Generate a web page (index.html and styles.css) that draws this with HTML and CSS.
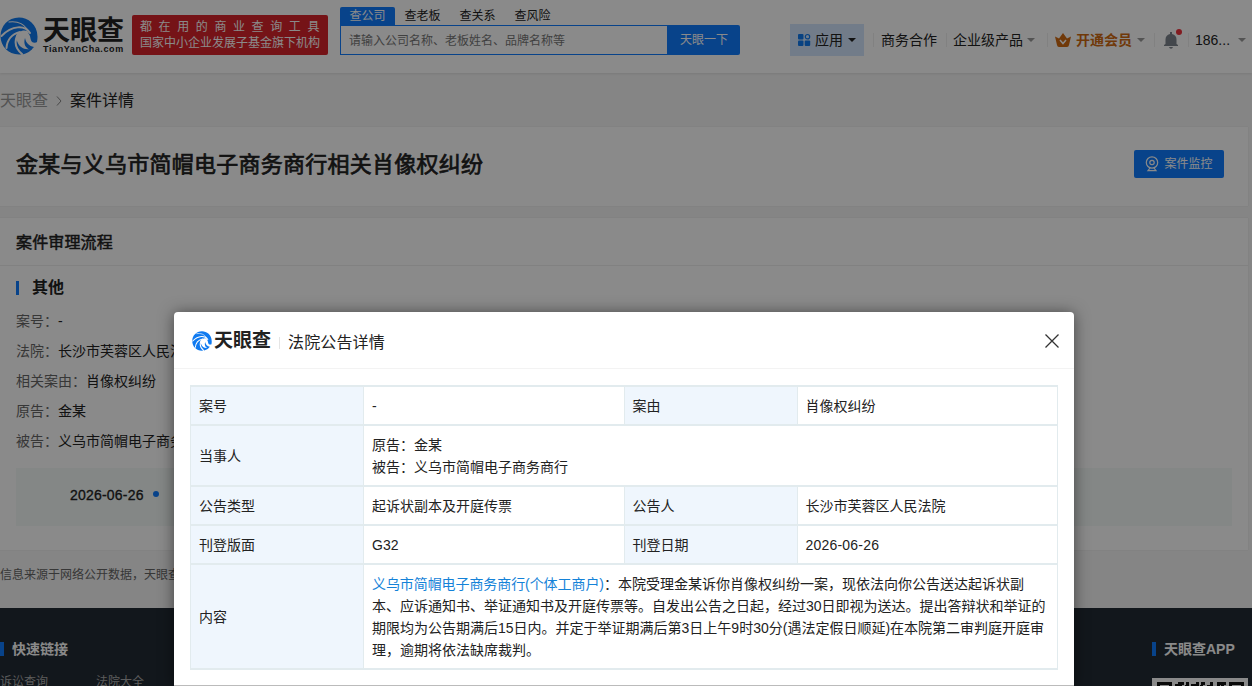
FILE: index.html
```html
<!DOCTYPE html>
<html lang="zh-CN">
<head>
  <meta charset="UTF-8">
  <title>案件详情 - 天眼查</title>
  <link rel="stylesheet" href="styles.css">
</head>
<body>

  <svg class="defs" width="0" height="0">
    <symbol id="eye" viewBox="0 0 38 38">
      <path d="M19 .5C8 .5.5 9 .5 19S8 37.500 19 37.500c6 0 10-2 13.500-6C25 31 21 27 20 20c1-4 6-6 9-3 2 3 1 6 3 8 1.500 1 4 1 5 0C40 9 29 .5 19 .5z" fill="#0f7af0"/>
      <g fill="none" stroke="#fff" stroke-linecap="round">
        <path d="M30 16C25 8 12 8 1.500 19" stroke-width="2"/>
        <path d="M20 15C12 17 7 23 6.500 31" stroke-width="2"/>
        <path d="M17 19C14 26 16 32 22 37" stroke-width="2"/>
        <path d="M27 12C23 6 17 4 9 5" stroke-width="1.200"/>
      </g>
      <path d="M20 15c-4 1-5 5-3 9 2 6 7 9 13 8-5-3-6-7-4-10-1-3 0-5 3-6-2-3-6-3-9-1z" fill="#fff"/>
      <path d="M25 21c1 5 4 8 9 9l-3 3c-5-1-8-6-6-12z" fill="#0f7af0"/>
    </symbol>
  </svg>

  <header class="header">
    <a class="logo" href="javascript:;">
      <svg class="logo-eye"><use href="#eye"/></svg>
      <span class="logo-text">
        <b>天眼查</b>
        <i>TianYanCha.com</i>
      </span>
    </a>
    <div class="slogan">
      <p class="wide">都在用的商业查询工具</p>
      <p>国家中小企业发展子基金旗下机构</p>
    </div>
    <div class="search">
      <nav class="search-tab">
        <a class="on" href="javascript:;">查公司</a>
        <a href="javascript:;">查老板</a>
        <a href="javascript:;">查关系</a>
        <a href="javascript:;">查风险</a>
      </nav>
      <div class="search-bar">
        <div class="search-input">请输入公司名称、老板姓名、品牌名称等</div>
        <a class="search-btn" href="javascript:;">天眼一下</a>
      </div>
    </div>
    <nav class="menu">
      <a class="app" href="javascript:;">
        <svg width="14" height="14" viewBox="0 0 14 14" fill="#0f7af0">
          <rect x="1" y="1" width="5.500" height="5.500" rx="1"/>
          <circle cx="10.500" cy="3.700" r="2.200" fill="none" stroke="#0f7af0" stroke-width="1.200"/>
          <rect x="1" y="7.500" width="5.500" height="5.500" rx="1"/>
          <rect x="7.700" y="7.500" width="5.500" height="5.500" rx="1"/>
        </svg>
        <span>应用</span><em class="arrow"></em>
      </a>
      <a class="coop" href="javascript:;">商务合作</a>
      <a class="product" href="javascript:;">企业级产品<em class="arrow"></em></a>
      <a class="vip" href="javascript:;">
        <svg width="16" height="14" viewBox="0 0 16 14">
          <path d="M0 3.500l4 2L8 0l4 5.500 4-2L14 12q-.3 2-2 2H4q-1.700 0-2-2z" fill="#d06a12"/>
          <path d="M5 7l3 3.500L11 7" fill="none" stroke="#fff" stroke-width="1.500"/>
        </svg>
        <span>开通会员</span><em class="arrow"></em>
      </a>
      <a class="bell" href="javascript:;">
        <svg width="14" height="17" viewBox="0 0 14 17" fill="#7d848c">
          <path d="M6 0h2v2c3 .5 4.500 2.700 4.500 5.500V12l1.500 1v1H0v-1l1.500-1V7.500C1.500 4.700 3 2.500 6 2zM5 15h4q-.5 1.700-2 1.700T5 15z"/>
        </svg>
        <span class="dot"></span>
      </a>
      <a class="user" href="javascript:;">186...<em class="arrow"></em></a>
    </nav>
  </header>

  <div class="crumb">
    <a href="javascript:;">天眼查</a>
    <svg width="6" height="10" viewBox="0 0 6 10"><path d="M1 .5L5 5 1 9.500" fill="none" stroke="#888"/></svg>
    <span>案件详情</span>
  </div>

  <section class="card title">
    <h1>金某与义乌市简帽电子商务商行相关肖像权纠纷</h1>
    <a class="monitor" href="javascript:;">
      <svg width="14" height="16" viewBox="0 0 14 16" fill="none" stroke="#fff" stroke-width="1.200">
        <circle cx="7" cy="6.500" r="5.700"/>
        <circle cx="7" cy="6.500" r="2.200"/>
        <path d="M5 12l-2 2.600h8L9 12"/>
      </svg>
      案件监控
    </a>
  </section>

  <section class="card process">
    <h2>案件审理流程</h2>
    <div class="process-body">
      <h3>其他</h3>
      <p><label>案号：</label>-</p>
      <p><label>法院：</label>长沙市芙蓉区人民法院</p>
      <p><label>相关案由：</label>肖像权纠纷</p>
      <p><label>原告：</label>金某</p>
      <p><label>被告：</label>义乌市简帽电子商务商行</p>
      <div class="timeline"><span>2026-06-26</span><em></em></div>
    </div>
  </section>

  <p class="source">信息来源于网络公开数据，天眼查</p>

  <footer class="footer">
    <div class="footer-links">
      <h4>快速链接</h4>
      <div class="links"><a href="javascript:;">诉讼查询</a><a href="javascript:;">法院大全</a></div>
    </div>
    <div class="footer-app">
      <h4>天眼查APP</h4>
      <div class="qr">
        <svg width="96" height="10" viewBox="0 0 96 10" fill="#111">
          <path d="M5 4h15v6h-3V7H8v3H5zM77 4h15v6h-3V7h-9v3h-3zM10 9h5v1h-5zM82 9h5v1h-5zM23 6h3V4h6v3h-2v3h-3V8h-4zM34 4h3v6h-4V7h1zM39 6h5V4h3v6h-4V8h-4zM49 4h4v3h-2v3h-3V7h1zM55 7h3V4h3v4h3v2h-9zM65 4h9v3h-2v3h-3V7h-1v3h-3z"/>
        </svg>
      </div>
    </div>
  </footer>

  <div class="mask"></div>

  <div class="modal">
    <div class="modal-head">
      <svg class="modal-eye"><use href="#eye"/></svg>
      <b>天眼查</b>
      <span>法院公告详情</span>
      <svg class="close" width="14" height="14" viewBox="0 0 14 14"><path d="M.5.5l13 13M13.500.5l-13 13" stroke="#333" stroke-width="1.300"/></svg>
    </div>
    <table class="detail">
      <tr class="row">
        <th>案号</th><td>-</td><th>案由</th><td>肖像权纠纷</td>
      </tr>
      <tr class="row-party">
        <th>当事人</th><td colspan="3">原告：金某<br>被告：义乌市简帽电子商务商行</td>
      </tr>
      <tr class="row">
        <th>公告类型</th><td>起诉状副本及开庭传票</td><th>公告人</th><td>长沙市芙蓉区人民法院</td>
      </tr>
      <tr class="row">
        <th>刊登版面</th><td>G32</td><th>刊登日期</th><td class="date">2026-06-26</td>
      </tr>
      <tr class="row-content">
        <th>内容</th>
        <td colspan="3"><a href="javascript:;">义乌市简帽电子商务商行(个体工商户)</a>：本院受理金某诉你肖像权纠纷一案，现依法向你公告送达起诉状副<br>本、应诉通知书、举证通知书及开庭传票等。自发出公告之日起，经过30日即视为送达。提出答辩状和举证的<br>期限均为公告期满后15日内。并定于举证期满后第3日上午9时30分(遇法定假日顺延)在本院第二审判庭开庭审<br>理，逾期将依法缺席裁判。</td>
      </tr>
    </table>
  </div>

</body>
</html>
```
FILE: styles.css
```css
* {
  margin: 0;
  padding: 0;
  box-sizing: border-box;
}
body {
  height: 686px;
  overflow: hidden;
  position: relative;
  background: #f5f5f5;
  color: #222;
  font: 14px/22px "Liberation Sans", "Noto Sans CJK SC", sans-serif;
}
a {
  color: inherit;
  text-decoration: none;
}
i, em {
  font-style: normal;
}
.defs {
  display: block;
}

/* header */
.header {
  display: flex;
  height: 73px;
  background: #fff;
  box-shadow: 0 1px 2px rgba(0, 0, 0, .08);
}
.logo {
  display: flex;
  width: 132px;
  padding-top: 17px;
}
.logo-eye {
  width: 38px;
  height: 38px;
  flex: none;
}
.logo-text {
  padding-left: 5px;
  white-space: nowrap;
}
.logo-text b {
  display: block;
  height: 28px;
  font-size: 27px;
  line-height: 29px;
}
.logo-text i {
  display: block;
  font-size: 9px;
  line-height: 9px;
  font-weight: bold;
  letter-spacing: .6px;
}
.slogan {
  width: 196px;
  height: 40px;
  margin-top: 15px;
  padding: 4px 8px;
  border-radius: 2px;
  background: #d9232b;
  color: #fff;
  font-size: 12px;
  line-height: 16px;
  white-space: nowrap;
}
.slogan .wide {
  letter-spacing: 6.600px;
}
.search {
  width: 400px;
  margin: 7px 0 0 12px;
}
.search-tab {
  display: flex;
  height: 18px;
  font-size: 12px;
  line-height: 18px;
}
.search-tab a {
  width: 55px;
  text-align: center;
}
.search-tab .on {
  background: #0f7dff;
  color: #fff;
  border-radius: 2px 2px 0 0;
}
.search-bar {
  display: flex;
  height: 30px;
  font-size: 12px;
  line-height: 30px;
}
.search-input {
  flex: 1;
  padding-left: 8px;
  border: 1px solid #0f7dff;
  color: #777;
}
.search-btn {
  width: 72px;
  text-align: center;
  background: #0f7dff;
  color: #fff;
  border-radius: 0 2px 2px 0;
}
.menu {
  display: flex;
  margin: 24px 0 0 50px;
  line-height: 32px;
  white-space: nowrap;
}
.menu a {
  display: flex;
  align-items: center;
  height: 32px;
}
.arrow {
  margin-left: 6px;
  border: 4px solid transparent;
  border-top-color: #999;
  border-bottom: 0;
}
.menu .app {
  width: 74px;
  padding-left: 7px;
  background: #d3e6fd;
}
.app span {
  margin-left: 4px;
}
.app .arrow {
  margin-left: 5px;
  border-top-color: #222;
}
/* thin separators between the menu items */
.menu .coop,
.menu .product,
.menu .vip,
.menu .bell,
.menu .user {
  background: linear-gradient(#eee, #eee) no-repeat 9px 50% / 1px 14px;
}
.menu .coop {
  width: 73px;
  padding-left: 17px;
}
.menu .product {
  width: 101px;
  padding-left: 16px;
}
.product .arrow {
  margin-left: 4px;
}
.menu .vip {
  width: 107px;
  padding-left: 17px;
  color: #d06a12;
  font-weight: bold;
}
.vip span {
  margin-left: 5px;
}
.vip .arrow {
  margin-left: 5px;
}
.menu .bell {
  position: relative;
  width: 34px;
  padding-left: 19px;
}
.bell svg {
  flex: none;
}
.bell .dot {
  position: absolute;
  left: 31px;
  top: 5px;
  width: 6px;
  height: 6px;
  border-radius: 50%;
  background: #f0323c;
}
.menu .user {
  padding-left: 16px;
}
.user .arrow {
  margin-left: 8px;
}

/* breadcrumb */
.crumb {
  display: flex;
  align-items: center;
  gap: 8px;
  height: 54px;
  padding-top: 1px;
  font-size: 16px;
}
.crumb a {
  color: #999;
}

/* cards */
.card {
  width: 1248px;
  background: #fff;
  box-shadow: 0 0 1px rgba(0, 0, 0, .12);
}
.title {
  display: flex;
  justify-content: space-between;
  height: 79px;
  padding: 23px 24px 0 16px;
}
.title h1 {
  font-size: 22px;
  line-height: 30px;
  font-weight: normal;
  letter-spacing: .25px;
  -webkit-text-stroke: .7px #222;
}
.monitor {
  display: flex;
  align-items: center;
  justify-content: center;
  gap: 5px;
  width: 90px;
  height: 28px;
  border-radius: 2px;
  background: #0f7dff;
  color: #fff;
  font-size: 12px;
}
.process {
  height: 332px;
  margin-top: 12px;
}
.process h2 {
  height: 48px;
  padding-left: 16px;
  border-bottom: 1px solid #eee;
  font-size: 16px;
  line-height: 50px;
  letter-spacing: .15px;
  font-weight: normal;
  -webkit-text-stroke: .5px #222;
}
.process-body {
  padding: 10px 16px 0;
}
.process-body h3 {
  display: flex;
  align-items: center;
  gap: 13px;
  height: 24px;
  margin-bottom: 6px;
  font-size: 16px;
}
.process-body h3::before {
  content: "";
  width: 3px;
  height: 14px;
  background: #0f7dff;
}
.process-body p {
  height: 30px;
  line-height: 30px;
}
.process-body label {
  color: #666;
}
.timeline {
  display: flex;
  align-items: center;
  gap: 9px;
  height: 58px;
  margin-top: 12px;
  padding: 0 0 4px 54px;
  background: #f4f9f8;
}
.timeline span {
  letter-spacing: .2px;
  -webkit-text-stroke: .3px #222;
}
.timeline em {
  width: 6px;
  height: 6px;
  margin-bottom: 2px;
  border-radius: 50%;
  background: #0f7dff;
}
.source {
  height: 58px;
  padding-top: 14px;
  color: #666;
  font-size: 12px;
}

/* footer */
.footer {
  display: flex;
  justify-content: space-between;
  height: 78px;
  padding-top: 30px;
  background: #222b34;
  color: #fff;
}
.footer h4 {
  display: flex;
  align-items: center;
  gap: 8px;
  height: 22px;
}
.footer h4::before {
  content: "";
  width: 4px;
  height: 14px;
  background: #0f7dff;
}
.links {
  display: flex;
  gap: 48px;
  padding-top: 11px;
  color: #aaa;
  font-size: 12px;
}
.footer-app {
  width: 100px;
}
.qr {
  width: 96px;
  height: 10px;
  margin-top: 18px;
  background: #fff;
}
.qr svg {
  display: block;
}

/* modal */
.mask {
  position: absolute;
  left: 0;
  top: 0;
  width: 100%;
  height: 100%;
  background: rgba(0, 0, 0, .46);
}
.modal {
  position: absolute;
  left: 174px;
  top: 312px;
  width: 900px;
  height: 374px;
  background: #fff;
  border-bottom: 1px solid #bbb;
  border-radius: 4px 4px 0 0;
  box-shadow: 0 1px 15px rgba(0, 0, 0, .5);
}
.modal-head {
  display: flex;
  align-items: center;
  height: 57px;
  padding: 2px 15px 0 18px;
  border-bottom: 1px solid #f3f3f3;
}
.modal-eye {
  width: 20px;
  height: 20px;
  margin-bottom: 1px;
}
.modal-head b {
  margin-left: 2px;
  font-size: 19px;
}
.modal-head span {
  margin: 3px auto 0 8px;
  padding-left: 8px;
  border-left: 1px solid #e5e5e5;
  font-size: 16px;
  line-height: 12px;
  letter-spacing: .15px;
}
.detail {
  width: 868px;
  margin: 16px 0 0 16px;
  border-collapse: collapse;
  table-layout: fixed;
}
.detail th,
.detail td {
  padding: 0 8px;
  border: 1px solid #e2ebee;
  text-align: left;
  white-space: nowrap;
}
.detail th {
  width: 173px;
  background: #eff6fd;
  font-weight: normal;
}
.detail tr {
  border-top: 2px solid #e2ebee;
  border-bottom: 2px solid #e2ebee;
}
.row {
  height: 39px;
}
.row-party {
  height: 61px;
}
.row-content {
  height: 105px;
}
.detail .date {
  letter-spacing: .2px;
}
.detail a {
  color: #1482d8;
  letter-spacing: -.08px;
}
```
